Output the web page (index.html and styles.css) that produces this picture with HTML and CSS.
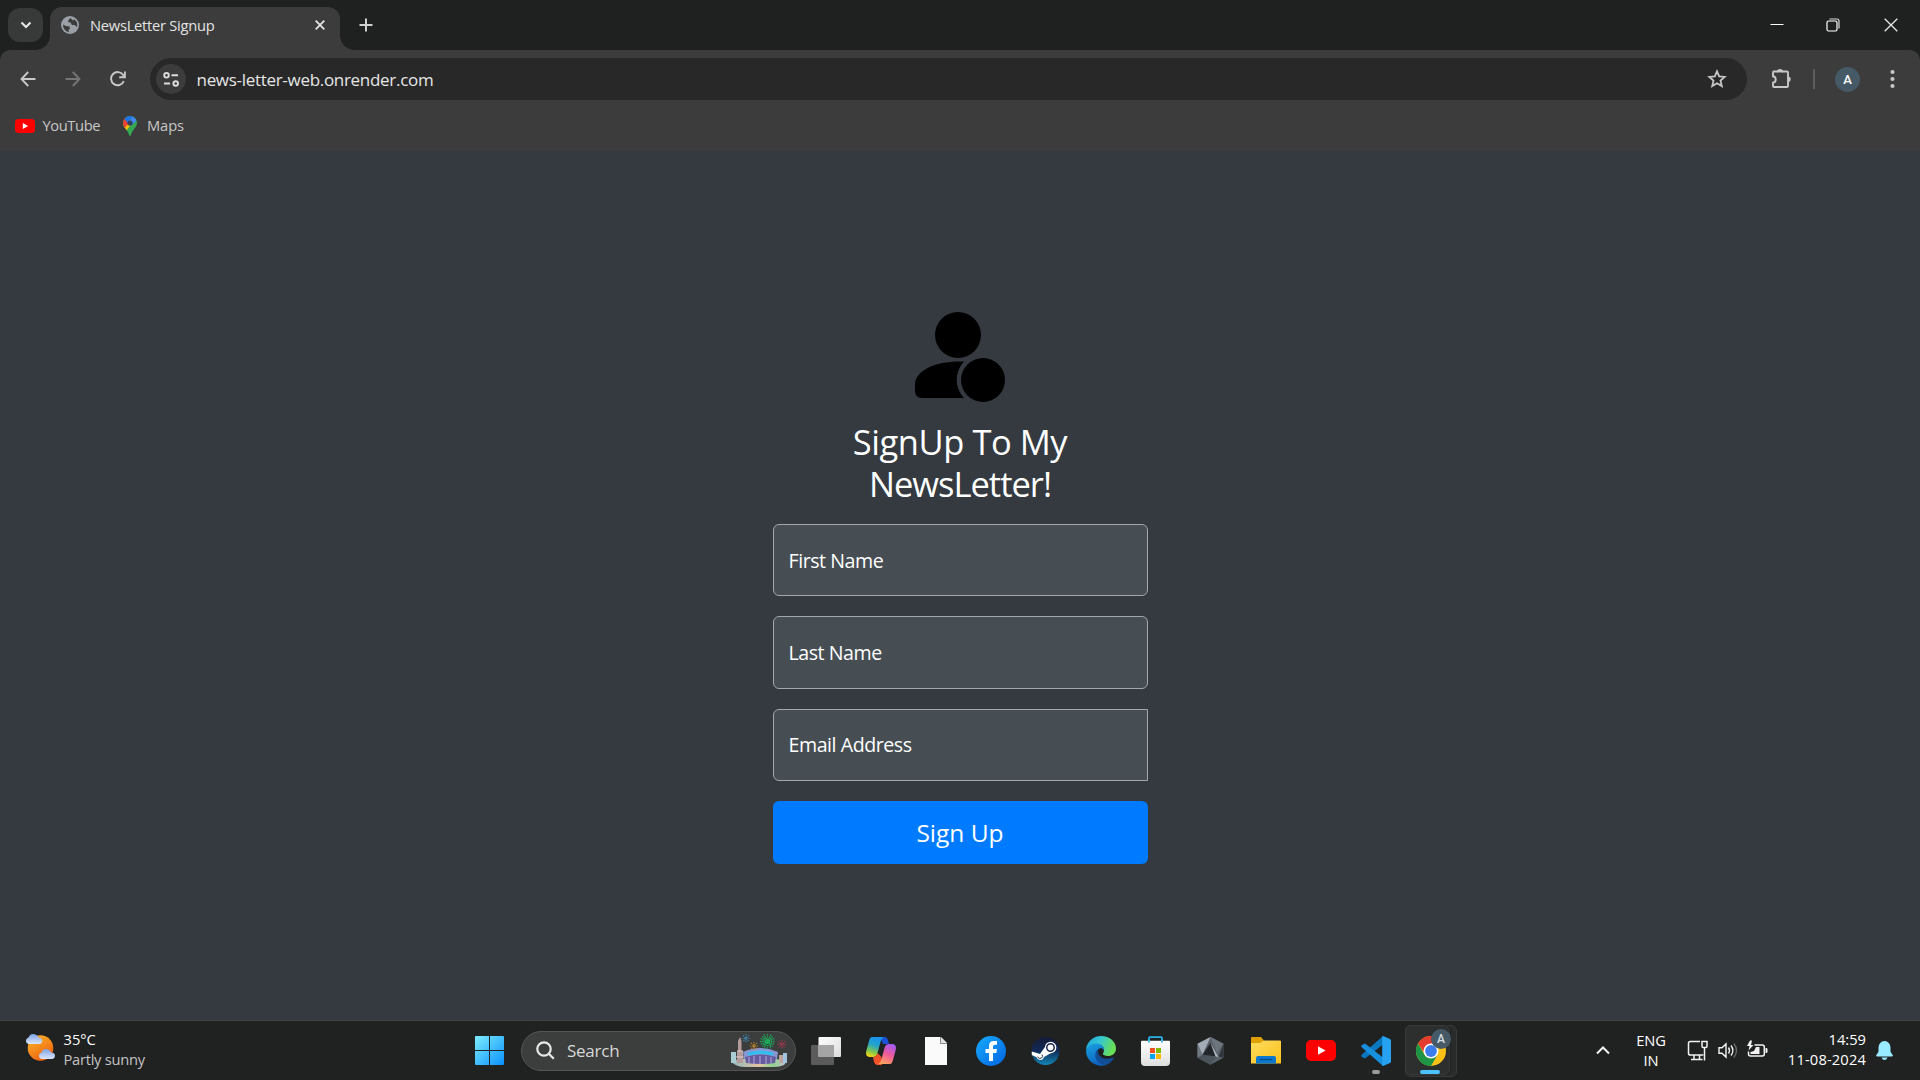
FILE: index.html
```html
<!DOCTYPE html>
<html lang="en">
<head>
<meta charset="utf-8">
<title>NewsLetter Signup</title>
<link rel="stylesheet" href="styles.css">
</head>
<body>
<header class="titlebar">
  <button class="tab-search" aria-label="Search tabs"><svg width="12" height="8" viewBox="0 0 12 8"><path d="M1.500 1.500 6 6l4.500-4.500" fill="none" stroke="#e6e6e6" stroke-width="2.100"/></svg></button>
  <div class="tab">
    <svg class="globe" width="18" height="18" viewBox="0 0 18 18"><circle cx="9" cy="9" r="9" fill="#9aa0a6"/><path d="M2 8.500 5 10l3.500.5.5 2-1.500 1.500.5 2.200A7.200 7.200 0 0 1 2 8.500zM9.500 2l-2 2-.5 2 2.500.5L11 9h2.500l2.500 2A7.200 7.200 0 0 0 13.500 3.500L12 4.500z" fill="#3c3c3c"/></svg>
    <span class="tab-title t">NewsLetter Signup</span>
    <svg class="tab-close" width="10" height="10" viewBox="0 0 10 10"><path d="m.7.7 8.600 8.600M9.300.7.7 9.300" stroke="#e0e0e0" stroke-width="1.900"/></svg>
  </div>
  <svg class="new-tab" width="14" height="14" viewBox="0 0 14 14"><path d="M7 .5v13M.5 7h13" stroke="#d0d0d0" stroke-width="2"/></svg>
  <div class="window-controls">
    <svg class="minimize" width="14" height="14" viewBox="0 0 14 14"><path d="M.5 6.500h13" stroke="#fff" stroke-width="1"/></svg>
    <svg width="14" height="14" viewBox="0 0 14 14"><rect x="1" y="3" width="10" height="10" rx="1.500" fill="none" stroke="#fff" stroke-width="1.200"/><path d="M3.500 1H11a2 2 0 0 1 2 2v7.500" fill="none" stroke="#ddd" stroke-width="1.200"/></svg>
    <svg width="14" height="14" viewBox="0 0 14 14"><path d="m.7.7 12.600 12.600M13.300.7.7 13.300" stroke="#e8e8e8" stroke-width="1.300"/></svg>
  </div>
</header>
<section class="chrome">
  <div class="toolbar">
    <div class="nav">
      <svg width="16" height="16" viewBox="0 0 16 16" fill="none" stroke="#c7c7c7" stroke-width="1.900"><path d="M15.500 8H1.700M8.200 1 1.500 8l6.700 7"/></svg>
      <svg width="16" height="16" viewBox="0 0 16 16" fill="none" stroke="#757575" stroke-width="1.900"><path d="M.5 8h13.800M7.800 1l6.700 7-6.700 7"/></svg>
      <svg width="16" height="16" viewBox="0 0 16 16" fill="none" stroke="#c7c7c7" stroke-width="1.900"><path d="M13.800 10.200A6.600 6.600 0 1 1 13.200 4L14.800 6M14.900.5v5.800H9.200"/></svg>
    </div>
    <div class="omnibox">
      <span class="site-info"><svg width="16" height="15" viewBox="0 0 16 15" fill="none" stroke="#dcdcdc" stroke-width="1.900"><circle cx="3.500" cy="3.300" r="2.300"/><path d="M8.500 3.300H15M1 11.500h6"/><circle cx="12.700" cy="11.500" r="2.300"/></svg></span>
      <span class="url t">news-letter-web.onrender.com</span>
      <svg class="star" width="20" height="20" viewBox="0 0 20 20"><path d="m10 2.300 2.200 5.100 5.500.5-4.200 3.700 1.300 5.500L10 14.200l-4.800 2.900 1.300-5.500L2.300 7.900l5.500-.5z" fill="none" stroke="#c7c7c7" stroke-width="1.800"/></svg>
    </div>
    <div class="actions">
      <svg class="puzzle" width="22" height="22" viewBox="0 0 22 22"><path d="M3 3.500h4.800M12 3.500h5q1 0 1 1V18q0 1-1 1H4q-1 0-1-1v-3.300q2.700-.2 2.700-3.200T3 8.300V4.500q0-1 1-1" fill="none" stroke="#c7c7c7" stroke-width="1.900"/><path d="M7 4a3 3 0 0 1 6 0zM18 8.500a2.700 2.700 0 0 1 0 5.400z" fill="#c7c7c7"/><path d="M7 3.500h6" stroke="#c7c7c7" stroke-width="1.900"/></svg>
      <span class="divider"></span>
      <span class="avatar">A</span>
      <svg class="dots" width="5" height="20" viewBox="0 0 5 20" fill="#c7c7c7"><circle cx="2.500" cy="3" r="2.100"/><circle cx="2.500" cy="10" r="2.100"/><circle cx="2.500" cy="17" r="2.100"/></svg>
    </div>
  </div>
  <nav class="bookmarks">
    <svg width="20" height="14" viewBox="0 0 20 14"><rect width="20" height="14" rx="3.500" fill="#f00"/><path d="m7.800 4 5.300 3-5.300 3z" fill="#fff"/></svg>
    <span class="bm-youtube t">YouTube</span>
    <svg class="pin" width="14" height="20" viewBox="0 0 14 20"><clipPath id="pin"><path d="M7 0a7 7 0 0 1 7 7c0 4.500-5 7-6.200 12.300q-.8 1.500-1.600 0C5 14 0 11.500 0 7a7 7 0 0 1 7-7z"/></clipPath><g clip-path="url(#pin)"><path fill="#34a853" d="M0 0h14v20H0z"/><path fill="#fbbc04" d="M0 7h9L3 15-1 12z"/><path fill="#ea4335" d="M0 0h5l2 6-5.500 6L-1 8z"/><path fill="#1a73e8" d="M2 0h8L5 7 1.500 3z"/><path fill="#4285f4" d="m10 0 4 4-5 5-3-3z"/></g><circle cx="7" cy="7" r="2.600" fill="#34405a"/></svg>
    <span class="bm-maps t">Maps</span>
  </nav>
</section>
<main class="page">
  <form class="signup">
    <svg class="user" width="90" height="90" viewBox="0 0 90 90"><circle cx="43" cy="23" r="23"/><circle cx="68" cy="68" r="22"/><path d="M49 49.500C22 48.500 0 57.500 0 73v6q0 7 7 7h42a26.500 26.500 0 0 1 0-36.500z"/></svg>
    <h1><span class="h-a t">SignUp To My</span><br><span class="h-b t">NewsLetter!</span></h1>
    <div class="field"><span class="t">First Name</span></div>
    <div class="field"><span class="t">Last Name</span></div>
    <div class="field field-email"><span class="t">Email Address</span></div>
    <button class="submit" type="button"><span class="t">Sign Up</span></button>
  </form>
</main>
<footer class="taskbar">
  <div class="weather">
    <svg width="31" height="30" viewBox="0 0 31 30"><defs><linearGradient id="sun" x2=".6" y2="1"><stop stop-color="#f9bd2d"/><stop offset="1" stop-color="#f0600f"/></linearGradient><linearGradient id="cloud" x2="0" y2="1"><stop stop-color="#7ea3e6"/><stop offset="1" stop-color="#dbe6fa"/></linearGradient></defs><circle cx="15.500" cy="15" r="12.800" fill="url(#sun)"/><path d="M3.500 11a3.400 3.400 0 0 1 0-6.600Q5.500 0 9.800 1.200 13 2 13.500 4.500 17.500 5 17.300 8 17 11 14 11z" fill="url(#cloud)"/><path d="M16.500 26a3.400 3.400 0 0 1 0-6.600q2-4.200 6-3.100 3.200.8 3.500 3.200 4.200.4 4 3.300-.3 3.200-3.500 3.200z" fill="url(#cloud)"/></svg>
    <div class="weather-text"><span class="w-temp t">35°C</span><span class="w-cond t">Partly sunny</span></div>
  </div>
  <div class="apps">
    <span class="app start"><svg width="29" height="29" viewBox="0 0 29 29"><defs><linearGradient id="win" gradientUnits="userSpaceOnUse" x1="0" y1="0" x2="29" y2="29"><stop stop-color="#7cecff"/><stop offset="1" stop-color="#0a91fb"/></linearGradient></defs><path d="M0 1q0-1 1-1h13v14H0zM15 0h13q1 0 1 1v13H15zM0 15h14v14H1q-1 0-1-1zM15 15h14v13q0 1-1 1H15z" fill="url(#win)"/></svg></span>
    <div class="search">
      <svg width="19" height="19" viewBox="0 0 19 19" fill="none" stroke="#e8e8e8" stroke-width="2.200"><circle cx="8" cy="8" r="6.700"/><path d="m12.800 12.800 5 5"/></svg>
      <span class="search-label t">Search</span>
      <svg class="art" width="56" height="34" viewBox="0 0 56 34"><defs><linearGradient id="ground"><stop stop-color="#8fb8c0"/><stop offset=".5" stop-color="#e2c3a0"/><stop offset=".75" stop-color="#8fd08e"/><stop offset="1" stop-color="#c5c0d8"/></linearGradient></defs><path d="M0 27q10-3 27-3t29 3l-3 4q-4 2-10 2H15Q4 33 0 27z" fill="url(#ground)"/><path d="M0 18h5v11H0z" fill="#a9cdd2"/><path d="M6 29V17h1V7l2-4 1.500 4v10h1.500v12z" fill="#b39a9b"/><path d="M6 17h6M5 23h8" stroke="#e2cfca"/><path d="M12 18q17-8 35 0l-1 7H13z" fill="#8a96d3"/><path d="M16 19q13-5 27 0l-2 3q-12-4-23 0z" fill="#36bdf0"/><path d="M14 23q15-5 31 0l-1 6q-14 2-29 0z" fill="#675b9f"/><path d="M18 23v6m5-7v8m6-8v8m6-8v8m5-7v6" stroke="#b6aadc"/><path d="M48 21h4v8h-4z" fill="#bda49d"/><path d="M52 19h4v10h-4z" fill="#a2c3df"/><g fill="none" stroke-dasharray="1.300 .9"><path d="M15 0v9M10.500 4.500h9M12 1.500l6 6m0-6-6 6" stroke="#3c82a8" stroke-width="1.200"/><path d="M23 8v8m-4-4h8m-7-3 6 6m0-6-6 6" stroke="#b98228" stroke-width="1.200"/><path d="M36.500 0v15M29 7.500h15M31.500 2.500l10 10m0-10-10 10M33 .5l7 14M40 .5l-7 14M29.500 4.500l14 6M43.500 4.500l-14 6" stroke="#18b85e" stroke-width="1.300"/><path d="M51 6v9m-4.500-4.500h9m-8-3 7 6m0-6-7 6" stroke="#a83a50" stroke-width="1.200"/></g></svg>
    </div>
    <span class="app"><svg width="30" height="28" viewBox="0 0 30 28"><defs><linearGradient id="tv" x2="1" y2="1"><stop stop-color="#fff"/><stop offset="1" stop-color="#dcdcdc"/></linearGradient></defs><rect y="8" width="23" height="20" rx="1" fill="#5b5b5b"/><rect x="7.500" width="22.500" height="20" rx="1" fill="url(#tv)"/><path d="M7.500 8H23v12H7.500z" fill="#a5a5a5"/></svg></span>
    <span class="app"><svg width="30" height="28" viewBox="0 0 30 28"><defs><linearGradient id="cpa" x1=".5" x2=".2" y2="1"><stop stop-color="#1793ee"/><stop offset=".4" stop-color="#27a5c4"/><stop offset=".7" stop-color="#7cc653"/><stop offset="1" stop-color="#ffd60a"/></linearGradient><linearGradient id="cpb" x1=".7" x2=".3" y2="1"><stop stop-color="#a45cf0"/><stop offset=".5" stop-color="#ef5a9b"/><stop offset="1" stop-color="#ffa45d"/></linearGradient></defs><path d="M14 0h5q2 0 3 3l1 4h-6z" fill="#1b50d8"/><path d="M6 0h12q-2.500 1-3.500 5l-3 11q-1 4-4.500 4H4q-5 0-3.700-6L3 4q1-4 3-4z" fill="url(#cpa)"/><path d="M16 28h-5q-2 0-3-3l-1-5q3.500 0 4.500-4l4 4z" fill="#f0532c"/><path d="M24 27H12q2.500-1 3.500-5l3-11q1-4 4.500-4h3q5 0 3.700 6L27 23q-1 4-3 4z" fill="url(#cpb)"/></svg></span>
    <span class="app"><svg width="22" height="28" viewBox="0 0 22 28"><path d="M0 0h16l6 6v22H0z" fill="#fafafa"/><path d="M15.500 0v6.500H22" fill="#e4e4e4" stroke="#8a8a8a"/></svg></span>
    <span class="app"><svg width="30" height="30" viewBox="0 0 30 30"><defs><linearGradient id="fb" x2="1" y2="1"><stop stop-color="#18acfe"/><stop offset="1" stop-color="#0163e0"/></linearGradient></defs><circle cx="15" cy="15" r="15" fill="url(#fb)"/><path d="M13 25v-8H9.500v-4H13v-3q0-5 5-5h3v3.800h-2q-2 0-2 1.700V13h4l-.7 4H17v8z" fill="#fff"/></svg></span>
    <span class="app"><svg width="29" height="28" viewBox="0 0 29 28"><defs><linearGradient id="steam" x2="0" y2="1"><stop stop-color="#151a38"/><stop offset=".5" stop-color="#112b57"/><stop offset="1" stop-color="#1387b8"/></linearGradient></defs><circle cx="14.500" cy="14" r="14" fill="url(#steam)"/><path d="m.8 14.500 8.200 2.500 5-7q.5-5 5.700-5.200a5.700 5.700 0 0 1 0 11.400L13 20q-.8 3-3.700 3-3-.3-3.800-2.800L.8 18z" fill="#fff"/><circle cx="19.500" cy="10.500" r="3.700" fill="#fff" stroke="#17264d" stroke-width="1.500"/><path d="M6.500 20q2 2.500 4 1t.5-3.500" fill="none" stroke="#234" stroke-width="1"/></svg></span>
    <span class="app"><svg width="30" height="30" viewBox="0 0 30 30"><defs><linearGradient id="edge" x2="1" y2=".3"><stop stop-color="#20a2dc"/><stop offset=".5" stop-color="#35c7d2"/><stop offset="1" stop-color="#68df55"/></linearGradient><linearGradient id="edgeb" x2=".4" y2="1"><stop stop-color="#1ba3e5"/><stop offset="1" stop-color="#0c62bd"/></linearGradient></defs><path d="M0 14A15 15 0 0 1 15 0c9 0 15 6 15 12.500 0 5-4 7.500-8 7.500-4 0-6-1.500-5-3.500 3-4-1-8.500-6-8.500Q4 8 0 14z" fill="url(#edge)"/><path d="M0 15Q2 7.500 10 7.500c6 0 9 4 7.500 7Q15 11 11.500 14c-4 5 .5 14 9.500 14.500A15 15 0 0 1 0 15z" fill="url(#edgeb)"/><path d="M13 12.500c-3 6 2.500 13 14 9.300Q28.500 21 27.500 23 25 27 20 29C11 29 5 18 13 12.500z" fill="#124d98"/><path d="M17.500 14.500Q18 16 17 17.500q-.8 3 5 2.800-6 1.700-9-2.300-1.500-4 1-5.500 2.500-.8 3.500 2z" fill="#202020"/></svg></span>
    <span class="app"><svg width="29" height="30" viewBox="0 0 29 30"><defs><linearGradient id="store" x2="0" y2="1"><stop stop-color="#fff"/><stop offset="1" stop-color="#dedede"/></linearGradient></defs><path d="M8 6V2q0-.8.8-.8h11.400q.8 0 .8.800v4" fill="none" stroke="#29b2ea" stroke-width="1.800"/><path d="M0 5.500q0-.8.8-.8h27.400q.8 0 .8.800V26q0 4-4 4H4q-4 0-4-4z" fill="url(#store)"/><path d="M8 4.700v1.800M21 4.700v1.800" stroke="#29b2ea" stroke-width="1.800"/><path d="M9 12h5v5H9z" fill="#f25022"/><path d="M15 12h5v5h-5z" fill="#7fba00"/><path d="M9 18h5v5H9z" fill="#00a4ef"/><path d="M15 18h5v5h-5z" fill="#ffb900"/></svg></span>
    <span class="app"><svg width="27" height="28" viewBox="0 0 27 28"><path d="m13.500 0 13 6.700v14l-13 7-13-7v-14z" fill="#59616a"/><path d="M13.500 0 .5 6.700l5 11z" fill="#a3acb5"/><path d="m13.500 0 13 6.700-6.500 9z" fill="#6c757e"/><path d="M.5 6.700v14l5-3z" fill="#6f7881"/><path d="m5.500 17.700-5 3 13 7 6-8.200z" fill="#4c545c"/><path d="m26.500 6.700-5 12.800 5 1.200z" fill="#31373d"/><path d="m13.500 6-8 11.700 13 1.500z" fill="#22262b"/><path d="m13.500 6 5 13.200 3 1z" fill="#adb6bd"/></svg></span>
    <span class="app"><svg width="30" height="27" viewBox="0 0 30 27"><defs><linearGradient id="fold" x2="1" y2="1"><stop stop-color="#ffdc61"/><stop offset="1" stop-color="#fac119"/></linearGradient></defs><path d="M0 1q0-1 1-1h9l3 3.500V7H0z" fill="#dfa006"/><path d="M0 6h9l4-2.500h16q1 0 1 1V26.500H0z" fill="url(#fold)"/><path d="M5 26.500V21q0-2 2-2h16q2 0 2 2v5.500z" fill="#0c78ce"/><path d="M8.500 22.500h13" stroke="#084a8c" stroke-width="1.200"/></svg></span>
    <span class="app"><svg width="30" height="21" viewBox="0 0 30 21"><rect width="30" height="21" rx="5" fill="#f00"/><path d="m12 6.300 7.500 4.200-7.500 4.200z" fill="#fff"/></svg></span>
    <span class="app app-code"><svg width="30" height="30" viewBox="0 0 30 30"><path d="M1 18.500 22 0v8.500L4 22.500 1 21q-1.500-1 0-2.500z" fill="#0a78c1"/><path d="M1 11.500 22 30v-8.500L4 7.500 1 9q-1.500 1 0 2.500z" fill="#1690dc"/><path d="m22 0 7 3q1 .5 1 1.700v20.600q0 1.200-1 1.700l-7 3q-.8-.3-.8-1V1q0-.7.8-1z" fill="#26a2f1"/></svg></span>
    <span class="app app-chrome"><i class="stack"></i><svg width="30" height="30" viewBox="0 0 30 30"><circle cx="15" cy="15" r="15" fill="#fbc116"/><path d="M2 7.500A15 15 0 0 1 28 7.500H15L9 18z" fill="#e33b2e"/><path d="M2 7.500A15 15 0 0 0 15 30l6.500-11.200L8.500 18.800z" fill="#1e9447"/><circle cx="15" cy="15" r="7.500" fill="#fff"/><circle cx="15" cy="15" r="5.900" fill="#3b7ded"/></svg><b class="badge">A</b></span>
  </div>
  <div class="tray">
    <svg class="caret" width="14" height="9" viewBox="0 0 14 9"><path d="m1 7.500 6-6 6 6" fill="none" stroke="#f2f2f2" stroke-width="2"/></svg>
    <div class="lang"><span class="t">ENG</span><span class="t">IN</span></div>
    <svg class="net" width="21" height="21" viewBox="0 0 21 21" fill="none" stroke="#f2f2f2" stroke-width="1.500"><path d="M13 1.500H3.300Q1.500 1.500 1.500 3.300v9.900Q1.500 15 3.300 15h13M7 15v4M12.500 15v4M4 19.500h11.500M15 1.500h5v4.700q0 1.300-1.300 1.300h-2.400Q15 7.500 15 6.200zM17.500 7.500v13"/></svg>
    <svg class="vol" width="20" height="17" viewBox="0 0 20 17" fill="none" stroke="#f2f2f2" stroke-width="1.400"><path d="M1 5.800h3L8 2v13l-4-3.800H1zM10.500 5.500q2 3 0 6M13 3.500q3.800 5 0 10"/><path d="M15.800 1.500q5.500 7 0 14" stroke="#666"/></svg>
    <svg class="bat" width="21" height="17" viewBox="0 0 21 17"><path d="M7.500 5h7.800q2 0 2 2v7q0 2-2 2H3.500q-2 0-2-2v-2.500" fill="none" stroke="#f2f2f2" stroke-width="1.500"/><path d="M9 7h3.500v7h-9v-2L7 11zM18.500 8h.8q1.200 0 1.200 1.300v2.400q0 1.300-1.200 1.300h-.8zM3 .5 0 6h2.500l-1 4.500L6.500 5H4L5 .5z" fill="#f2f2f2"/></svg>
    <div class="clock"><span class="t">14:59</span><span class="c-date t">11-08-2024</span></div>
    <svg class="bell" width="17" height="19" viewBox="0 0 17 19" fill="#99ebff"><path d="M8.500 0Q14 .5 14.500 6.500v4.300l2.300 3.500q.3 1.200-1 1.200H1.200q-1.300 0-1-1.200l2.300-3.500V6.500Q3 .5 8.500 0zM5.500 16.500h6Q10.500 19 8.500 19t-3-2.500z"/></svg>
  </div>
</footer>
</body>
</html>
```
FILE: styles.css
```css
* { box-sizing: border-box; }
body {
  margin: 0;
  width: 1920px;
  height: 1080px;
  overflow: hidden;
  display: flex;
  flex-direction: column;
  background: #343a40;
  font-family: "Open Sans", "Noto Sans", sans-serif;
  font-size: 14.700px;
  color: #e3e3e3;
}
svg { display: block; flex: none; }
button { border: 0; padding: 0; font: inherit; }
.t { white-space: nowrap; }

.titlebar { height: 50px; flex: none; background: #1f2120; display: flex; align-items: center; padding-left: 8px; }
.tab-search { width: 35px; height: 34px; border-radius: 12px; background: #383939; display: grid; place-items: center; }
.tab {
  position: relative;
  width: 290px;
  height: 43px;
  margin: 7px 0 0 7px;
  padding: 0 15px 7px 11px;
  border-radius: 12px 12px 0 0;
  background: #3c3c3c;
  display: flex;
  align-items: center;
}
.tab::before, .tab::after { content: ""; position: absolute; bottom: 0; width: 14px; height: 14px; }
.tab::before { left: -14px; background: radial-gradient(circle at 0 0, transparent 13.500px, #3c3c3c 14px); }
.tab::after { right: -14px; background: radial-gradient(circle at 100% 0, transparent 13.500px, #3c3c3c 14px); }
.tab-title { margin-left: 11px; letter-spacing: -.26px; }
.tab-close { margin-left: auto; }
.new-tab { margin-left: 18.500px; }
.window-controls { margin-left: auto; display: flex; gap: 44px; padding-right: 22px; }
.minimize { margin-right: -2px; }

.chrome { height: 101px; flex: none; background: linear-gradient(#1f2120, #1f2120) top / 100% 12px no-repeat; }
.toolbar { height: 58px; background: #3c3c3c; border-radius: 10px 10px 0 0; display: flex; align-items: center; padding: 0 25px 0 20px; }
.nav { display: flex; gap: 29px; }
.omnibox { width: 1597px; height: 42px; margin-left: 24px; border-radius: 21px; background: #282828; display: flex; align-items: center; padding: 0 20px 0 6px; }
.site-info { width: 30px; height: 30px; border-radius: 50%; background: #3c3c3c; display: grid; place-items: center; }
.url { margin-left: 10.500px; font-size: 17px; letter-spacing: -.3px; color: #e6e6e6; }
.star { margin-left: auto; }
.actions { display: flex; align-items: center; flex: 1; margin-left: 23px; }
.divider { width: 2px; height: 20px; background: #5c5c5c; margin-left: 21px; }
.avatar { width: 25px; height: 25px; border-radius: 50%; background: #455a66; color: #fff; display: grid; place-items: center; margin-left: 20px; font: 500 13px/1 Roboto, sans-serif; }
.dots { margin-left: auto; }
.bookmarks { height: 43px; background: #3c3c3c; display: flex; align-items: center; padding: 0 0 7px 15px; color: #c7c7c7; letter-spacing: -.4px; }
.bookmarks .t { padding-bottom: 2px; }
.bm-youtube { margin-left: 7.500px; width: 57.500px; }
.pin { margin-left: 23px; }
.bm-maps { margin-left: 10px; letter-spacing: -.1px; }

.page { flex: 1; display: flex; justify-content: center; background: #343a40; padding-top: 161px; }
.signup { width: 375px; display: flex; flex-direction: column; }
.user { margin-left: 142px; }
h1 { margin: 19px 0; font-size: 34.500px; line-height: 42px; font-weight: 400; color: #fff; text-align: center; }
.h-a { letter-spacing: -.45px; }
.h-b { letter-spacing: -1px; }
.field { height: 72.330px; margin-bottom: 20px; padding-left: 15px; border: 1px solid #a3a7aa; border-radius: 6px; background: #464e54; display: flex; align-items: center; font-size: 19.600px; letter-spacing: -.45px; color: #fff; }
.field-email { border-radius: 6px 0 0 6px; }
.submit { height: 63px; border-radius: 6px; background: #007bff; color: #fff; font-size: 24.500px; }

.taskbar { height: 60px; flex: none; background: #202121; border-top: 1px solid #414345; display: grid; grid-template-columns: 462px 1000px 1fr; }
.weather { display: flex; align-items: center; padding-left: 24.500px; }
.weather > svg { margin-top: -5px; }
.weather-text, .lang, .clock { display: flex; flex-direction: column; line-height: 20px; padding-bottom: 4px; }
.weather-text { margin-left: 8px; }
.w-temp { color: #fff; }
.w-cond { color: #c4c4c4; letter-spacing: -.27px; }
.apps { display: flex; align-items: center; }
.app { position: relative; width: 55px; height: 59px; display: grid; place-items: center; }
.app.start { margin-right: 4px; }
.search { width: 275px; height: 40px; margin-right: 2px; border: 1px solid #555; border-radius: 20px; background: #3c3d3d; display: flex; align-items: center; padding: 0 8px 0 14px; }
.search-label { margin-left: 12px; font-size: 17px; letter-spacing: -.25px; color: #d8d8d8; }
.art { margin-left: auto; }
.app-code::after, .app-chrome::after { content: ""; position: absolute; bottom: 6px; left: 24px; width: 8px; height: 4px; border-radius: 2px; background: #9a9a9a; }
.app-chrome { isolation: isolate; }
.app-chrome::before, .stack { content: ""; position: absolute; z-index: -1; left: 2px; top: 4px; width: 50px; height: 50px; border-radius: 6px; background: #292a2a; border: 1px solid #383939; }
.stack { width: 45px; background: #2d2e2e; border-color: #383939; box-shadow: 1px 0 0 #1f2020; }
.app-chrome::after { left: 17px; width: 20px; background: #4cc2ff; }
.badge { position: absolute; left: 28px; top: 8px; width: 20px; height: 20px; border-radius: 50%; background: #455a66; color: #d7dde0; display: grid; place-items: center; font: 500 12px/1 Roboto, sans-serif; }
.tray { display: flex; align-items: center; color: #fff; }
.caret { margin-left: 134px; }
.lang { width: 30px; margin-left: 26px; align-items: center; padding-bottom: 2px; letter-spacing: -.2px; }
.net { margin-left: 21px; }
.vol { margin-left: 10px; }
.bat { margin-left: 9px; margin-top: -4px; }
.clock { width: 78px; margin-left: 20px; align-items: flex-end; }
.c-date { letter-spacing: .15px; }
.bell { margin-left: 10px; }
```
